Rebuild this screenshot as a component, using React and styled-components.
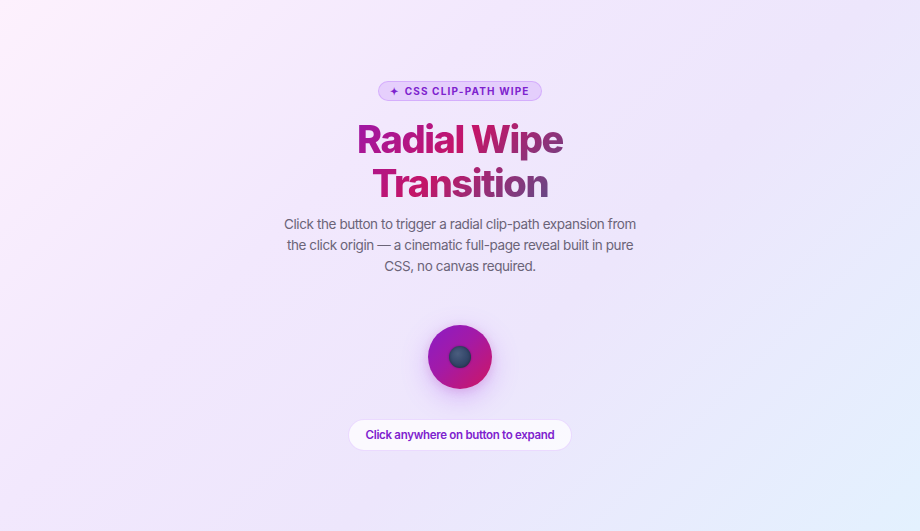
import React from "react";
import styled, { createGlobalStyle } from "styled-components";

const Global = createGlobalStyle`
  html, body { margin: 0; padding: 0; height: 100%; }
  body { font-family: Inter, "Noto Sans", sans-serif; }
  #root { min-height: 100vh; }
`;

const Page = styled.div`
  min-height: 100vh;
  box-sizing: border-box;
  display: flex;
  flex-direction: column;
  align-items: center;
  justify-content: center;
  background: linear-gradient(135deg, #fdf1fd 0%, #f2e8fd 35%, #ede6fc 60%, #e3f1fe 100%);
`;

const Badge = styled.div`
  display: inline-flex;
  align-items: center;
  gap: 5px;
  height: 20px;
  box-sizing: border-box;
  padding: 0 11px;
  border-radius: 999px;
  background: rgba(192, 132, 252, 0.25);
  border: 1px solid rgba(192, 132, 252, 0.45);
  color: #7e22ce;
  font-size: 10px;
  font-weight: 700;
  letter-spacing: 1.15px;
  text-transform: uppercase;
`;

const Title = styled.h1`
  margin: 16px 0 0;
  font-size: 38px;
  line-height: 44px;
  font-weight: 800;
  letter-spacing: -1.45px;
  text-align: center;
  background: linear-gradient(135deg, #9d17a8 0%, #c41568 45%, #5a4f8a 100%);
  -webkit-background-clip: text;
  background-clip: text;
  color: transparent;
`;

const Lead = styled.p`
  margin: 9px 0 0;
  max-width: 356px;
  font-size: 13.5px;
  line-height: 21px;
  letter-spacing: -0.4px;
  color: #6b6478;
  text-align: center;
`;

const Orb = styled.button`
  margin-top: 48px;
  width: 64px;
  height: 64px;
  border-radius: 50%;
  border: none;
  padding: 0;
  display: flex;
  align-items: center;
  justify-content: center;
  background: linear-gradient(135deg, #8a1cc6 0%, #a41aa6 45%, #cf1662 100%);
  box-shadow: 0 8px 26px rgba(168, 85, 247, 0.35), 0 2px 8px rgba(190, 24, 93, 0.15);
  cursor: pointer;
`;

const Core = styled.span`
  width: 22px;
  height: 22px;
  border-radius: 50%;
  background: radial-gradient(circle at 40% 35%, #4a5d7e 0%, #34476a 50%, #253450 100%);
  box-shadow: inset 0 0 3px rgba(0, 0, 0, 0.35), 0 0 2px rgba(20, 20, 40, 0.4);
`;

const Hint = styled.button`
  margin-top: 30px;
  height: 32px;
  padding: 0 17px;
  border-radius: 999px;
  border: 1px solid rgba(216, 180, 254, 0.45);
  background: rgba(255, 255, 255, 0.75);
  color: #7e22ce;
  font-family: Inter, "Noto Sans", sans-serif;
  font-size: 11.5px;
  font-weight: 600;
  letter-spacing: -0.3px;
  cursor: pointer;
`;

export default function App() {
  return (
    <>
      <Global />
      <Page>
        <Badge>
          <span>✦</span>
          <span>CSS clip-path wipe</span>
        </Badge>
        <Title>
          Radial Wipe
          <br />
          Transition
        </Title>
        <Lead>
          Click the button to trigger a radial clip-path expansion from the click origin — a
          cinematic full-page reveal built in pure CSS, no canvas required.
        </Lead>
        <Orb aria-label="Expand">
          <Core />
        </Orb>
        <Hint>Click anywhere on button to expand</Hint>
      </Page>
    </>
  );
}
